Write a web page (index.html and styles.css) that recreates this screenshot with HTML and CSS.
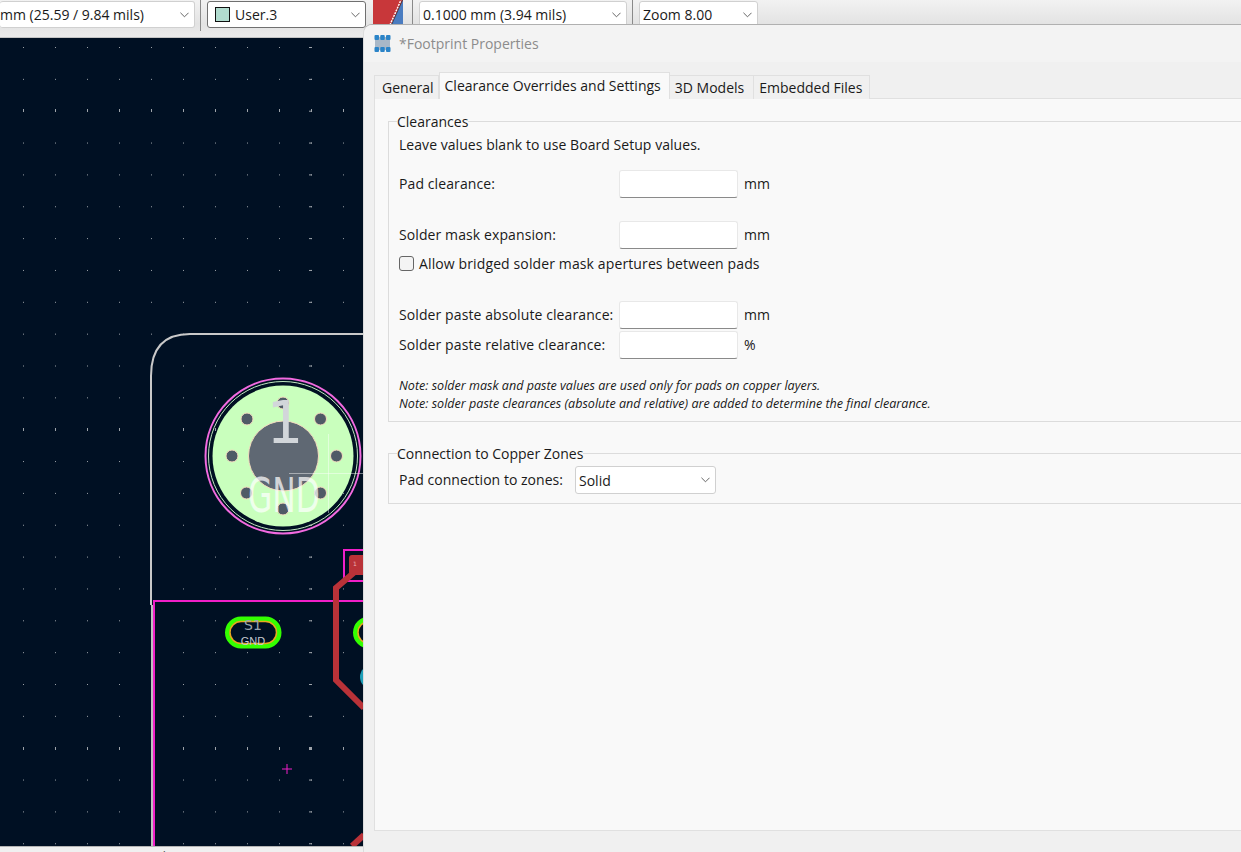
FILE: index.html
```html
<!DOCTYPE html>
<html lang="en">
<head>
    <meta charset="UTF-8">
    <title>Footprint Properties</title>
    <link rel="stylesheet" href="styles.css">
</head>
<body>
<div class="toolbar">
    <div class="combo combo-track"><span class="combo-text">mm (25.59 / 9.84 mils)</span><svg class="chev" viewBox="0 0 10 6"><path d="M.5.5 5 5 9.500.5"/></svg></div>
    <i class="sep"></i>
    <div class="combo combo-layer"><i class="swatch"></i><span class="combo-text">User.3</span><svg class="chev" viewBox="0 0 10 6"><path d="M.5.5 5 5 9.500.5"/></svg></div>
    <svg class="pair" viewBox="0 0 30 25"><rect width="30" height="25" fill="#c8373a"/><path d="M18 25 30 0V25Z" fill="#4a7cc0"/><path d="M17 25 28 0" stroke="#fff" stroke-width="1.500" stroke-dasharray="2 1"/><path d="M18.500 25 29.500 0" stroke="#333" stroke-width=".7"/></svg>
    <i class="sep sep-pair"></i>
    <div class="combo combo-grid"><span class="combo-text">0.1000 mm (3.94 mils)</span><svg class="chev" viewBox="0 0 10 6"><path d="M.5.5 5 5 9.500.5"/></svg></div>
    <i class="sep"></i>
    <div class="combo combo-zoom"><span class="combo-text">Zoom 8.00</span><svg class="chev" viewBox="0 0 10 6"><path d="M.5.5 5 5 9.500.5"/></svg></div>
</div>

<svg class="canvas" viewBox="0 38 1241 808">
    <defs>
        <pattern id="grid" x="23" y="47" width="32" height="31.85" patternUnits="userSpaceOnUse">
            <rect width="1" height="1" fill="#9aa0a6"/>
        </pattern>
        <pattern id="gridrow" x="23" y="428" width="32" height="319" patternUnits="userSpaceOnUse">
            <rect width="1" height="3" fill="#9ea4aa"/>
        </pattern>
        <pattern id="gridcol" x="309" y="47" width="320" height="31.85" patternUnits="userSpaceOnUse">
            <rect width="3" height="1" fill="#9ea4aa"/>
        </pattern>
    </defs>
    <rect x="0" y="38" width="1241" height="808" fill="url(#grid)"/>
    <rect x="0" y="38" width="1241" height="808" fill="url(#gridrow)"/>
    <rect x="0" y="38" width="1241" height="808" fill="url(#gridcol)"/>
    <rect x="309" y="747" width="3" height="3" fill="#9ea4aa"/>

    <path d="M151 605V376Q151 334 190 334H364" class="edge"/>
    <path d="M152 605V846" class="edge edge-low"/>
    <path d="M154 846V601H364" class="courtyard"/>
    <path d="M364 550H344V581H364" class="courtyard"/>

    <path d="M357 570 336 588V680L364 708" class="track"/>
    <path d="M352 846 364 835" class="track"/>
    <rect x="349" y="555" width="24" height="20" rx="3" fill="#b93238"/>
    <text x="353" y="566" class="tiny">1</text>
    <circle cx="372" cy="677" r="12" fill="#1f9fb8"/>

    <circle cx="283" cy="456" r="77.500" class="ring-pink"/>
    <circle cx="283" cy="456" r="74.500" class="ring-thin"/>
    <circle cx="283" cy="456" r="70.500" fill="#c9ffbd"/>
    <circle cx="283.500" cy="456" r="35" fill="#5f6873" stroke="#f4dcc0" stroke-width="1"/>
    <g class="vias">
        <circle cx="283" cy="403" r="6" fill="#b3b9c0"/>
        <circle cx="247" cy="419" r="6"/>
        <circle cx="320.500" cy="419" r="6"/>
        <circle cx="232" cy="456" r="6"/>
        <circle cx="336.500" cy="456" r="6"/>
        <circle cx="246.500" cy="493" r="6"/>
        <circle cx="320.500" cy="493" r="6"/>
        <circle cx="283" cy="509" r="6"/>
    </g>
    <text x="285" y="443" text-anchor="middle" class="pad-num">1</text>
    <text x="248" y="512" textLength="72" lengthAdjust="spacingAndGlyphs" class="pad-net">GND</text>
    <path d="M328.500 434V513M289 473.500H364" class="cross-white"/>

    <rect x="227.500" y="619" width="51.500" height="27" rx="13.500" class="oval"/>
    <rect x="230" y="621.500" width="46.500" height="22" rx="11" class="oval-in"/>
    <text x="253" y="630" text-anchor="middle" class="oval-name">S1</text>
    <text x="253" y="645" text-anchor="middle" class="oval-net">GND</text>
    <rect x="355.500" y="619" width="51.500" height="27" rx="13.500" class="oval"/>
    <rect x="358" y="621.500" width="46.500" height="22" rx="11" class="oval-in"/>

    <path d="M282 769H292M287 764V774" class="cross-pink"/>
</svg>

<div class="status"><span>Pads</span><span>Footprint</span><span>Fi</span></div>

<div class="dialog">
    <div class="title">
        <svg class="title-icon" viewBox="0 0 17 17"><rect x="1" y="2" width="15" height="13" rx="1.500" fill="#a9b8c8"/><g fill="#2b84c8"><rect x=".5" y="0" width="4.500" height="5" rx="1"/><rect x="6.250" y="0" width="4.500" height="5" rx="1"/><rect x="12" y="0" width="4.500" height="5" rx="1"/><rect x=".5" y="12" width="4.500" height="5" rx="1"/><rect x="6.250" y="12" width="4.500" height="5" rx="1"/><rect x="12" y="12" width="4.500" height="5" rx="1"/></g></svg>
        <span>*Footprint Properties</span>
    </div>
    <div class="tabs">
        <div class="tab">General</div>
        <div class="tab tab-active">Clearance Overrides and Settings</div>
        <div class="tab tab-models">3D Models</div>
        <div class="tab">Embedded Files</div>
    </div>
    <div class="page">
        <fieldset class="group group-clear">
            <legend>Clearances</legend>
            <p class="hint">Leave values blank to use Board Setup values.</p>
            <div class="row row-pad"><label>Pad clearance:</label><i class="input"></i><span>mm</span></div>
            <div class="row row-mask"><label>Solder mask expansion:</label><i class="input"></i><span>mm</span></div>
            <div class="check-row"><i class="check"></i><span>Allow bridged solder mask apertures between pads</span></div>
            <div class="row row-abs"><label>Solder paste absolute clearance:</label><i class="input"></i><span>mm</span></div>
            <div class="row row-rel"><label>Solder paste relative clearance:</label><i class="input"></i><span>%</span></div>
            <p class="note note-first">Note: solder mask and paste values are used only for pads on copper layers.</p>
            <p class="note">Note: solder paste clearances (absolute and relative) are added to determine the final clearance.</p>
        </fieldset>
        <fieldset class="group group-zones">
            <legend>Connection to Copper Zones</legend>
            <div class="zone-row">
                <label>Pad connection to zones:</label>
                <div class="combo combo-solid"><span class="combo-text">Solid</span><svg class="chev" viewBox="0 0 10 6"><path d="M.5.5 5 5 9.500.5"/></svg></div>
            </div>
        </fieldset>
    </div>
</div>
</body>
</html>
```
FILE: styles.css
```css
html, body {
    margin: 0;
    height: 100%;
}

body {
    position: relative;
    width: 1241px;
    height: 852px;
    overflow: hidden;
    display: flex;
    flex-direction: column;
    background: #f0f0f0;
    color: #1a1a1a;
    font: 14px "Open Sans", "Noto Sans", sans-serif;
}

/* toolbar */
.toolbar {
    flex: none;
    height: 37px;
    display: flex;
    align-items: flex-start;
    border-bottom: 1px solid #c4c4c4;
    background: linear-gradient(#f2f2f2, #e3e3e3 24px, #ebebeb);
}

.combo {
    box-sizing: border-box;
    height: 27px;
    display: flex;
    align-items: center;
    background: #fff;
    border: 1px solid #d0d0d0;
    border-radius: 3px;
    padding: 0 5px 0 3px;
}

.combo-text {
    flex: 1;
    white-space: nowrap;
}

.chev {
    flex: none;
    width: 9px;
    height: 6px;
    fill: none;
    stroke: #555;
    stroke-width: 1;
}

.toolbar .combo {
    margin-top: 1px;
}

.combo-track {
    width: 195px;
    border-left: 0;
    padding-left: 0;
}

.combo-layer {
    width: 159px;
    border-color: #707070;
    padding-left: 7px;
}

.combo-grid {
    width: 208px;
}

.combo-zoom {
    width: 119px;
}

.sep {
    flex: none;
    width: 1px;
    height: 31px;
    background: #8a8a8a;
    margin: 0 6px 0 5px;
}

.sep-pair {
    margin-left: 9px;
}

.swatch {
    width: 13px;
    height: 13px;
    margin-right: 5px;
    background: #b1dccf;
    border: 1px solid #111;
}

.pair {
    flex: none;
    width: 30px;
    height: 25px;
    margin-left: 7px;
}

/* board canvas */
.canvas {
    flex: none;
    display: block;
    width: 1241px;
    height: 808px;
    background: #001023;
}

.edge {
    fill: none;
    stroke: #c9c9c9;
    stroke-width: 2;
}

.edge-low {
    stroke: #bdbdbd;
}

.courtyard {
    fill: none;
    stroke: #f01fc8;
    stroke-width: 2;
}

.track {
    fill: none;
    stroke: #b93238;
    stroke-width: 6;
}

.tiny {
    font: 6px "DejaVu Sans", sans-serif;
    fill: #e8b0b0;
}

.ring-pink {
    fill: none;
    stroke: #f26ae0;
    stroke-width: 2;
}

.ring-thin {
    fill: none;
    stroke: #c0e8c0;
    stroke-width: 1;
}

.vias circle {
    fill: #4f5a66;
    stroke: #f4dcc0;
    stroke-width: 1;
}

.pad-num {
    font: 58px "DejaVu Sans", sans-serif;
    fill: #d2d6da;
}

.pad-net {
    font: 48px "DejaVu Sans", sans-serif;
    fill: #fff;
    fill-opacity: .72;
}

.cross-white {
    fill: none;
    stroke: #fff;
    stroke-opacity: .45;
    stroke-width: 1;
}

.oval {
    fill: none;
    stroke: #33ff00;
    stroke-width: 5;
}

.oval-in {
    fill: none;
    stroke: #e8a820;
    stroke-width: 1.500;
}

.oval-name {
    font: 14px "DejaVu Sans", sans-serif;
    fill: #9aa4ae;
}

.oval-net {
    font: 11px "Liberation Sans", sans-serif;
    fill: #c6ccd2;
}

.cross-pink {
    fill: none;
    stroke: #f01fc8;
    stroke-width: 1;
}

/* only the tops of the status labels show above the window edge */
.status {
    flex: 1;
    display: flex;
    gap: 56px;
    padding: 4px 0 0 143px;
    overflow: hidden;
    line-height: 11px;
    font-size: 13px;
    color: #555;
    border-top: 1px solid #b4b4b4;
}

/* dialog window, floats over the editor */
.dialog {
    position: absolute;
    left: 364px;
    top: 25px;
    right: 0;
    bottom: 0;
    display: flex;
    flex-direction: column;
    background: #f0f0f0;
    border-top-left-radius: 8px;
    box-shadow: 0 -1px 0 #b0b0b0, -1px 0 0 #dcdcdc;
}

.title {
    flex: none;
    height: 37px;
    display: flex;
    align-items: center;
    padding-left: 10px;
    gap: 8px;
    color: #8c8c8c;
    background: #f3f3f3;
    border-top-left-radius: 8px;
}

.title-icon {
    width: 17px;
    height: 17px;
}

.tabs {
    flex: none;
    height: 26px;
    display: flex;
    align-items: flex-end;
    padding-left: 10px;
    margin-top: 11px;
    position: relative;
    z-index: 1;
    margin-bottom: -1px;
}

.tab {
    height: 24px;
    line-height: 23px;
    padding: 0 7px 0 5px;
    background: #f0f0f0;
    border: 1px solid #e0e0e0;
    border-bottom: 0;
    border-left-width: 0;
    box-sizing: border-box;
}

.tab:first-child {
    border-left-width: 1px;
    padding: 0 4px 0 7px;
}

.tab-active {
    height: 27px;
    line-height: 25px;
    background: #f9f9f9;
    border-left-width: 1px;
    padding: 0 8px 0 5px;
}

.tab-models {
    padding-right: 9px;
}

.page {
    flex: 1;
    margin: 0 0 21px 10px;
    background: #f9f9f9;
    border: 1px solid #e0e0e0;
    border-right: 0;
    padding-top: 13px;
}

.group {
    margin: 0 0 0 13px;
    padding: 0 0 0 10px;
    border: 1px solid #dcdcdc;
    border-right: 0;
    min-width: 0;
}

.group legend {
    padding: 2px 0 0;
    margin-left: -2px;
    line-height: 16px;
}

.group-clear {
    height: 310px;
    box-sizing: border-box;
}

.group-zones {
    margin-top: 22px;
    height: 60px;
    box-sizing: border-box;
}

.hint {
    margin: 6px 0 0;
    line-height: 18px;
    letter-spacing: .05px;
}

.row {
    display: flex;
    align-items: center;
    height: 28px;
}

.row label {
    width: 220px;
    flex: none;
    padding-bottom: 2px;
    letter-spacing: .1px;
}

.row span {
    margin-left: 6px;
    padding-bottom: 2px;
}

.input {
    width: 119px;
    height: 28px;
    box-sizing: border-box;
    background: #fff;
    border: 1px solid #e8e8e8;
    border-bottom: 1px solid #8a8a8a;
    border-radius: 3px;
}

.row-pad {
    margin-top: 16px;
}

.row-mask {
    margin-top: 23px;
}

.check-row {
    display: flex;
    align-items: center;
    height: 20px;
    margin-top: 4px;
    letter-spacing: .12px;
}

.check {
    box-sizing: border-box;
    width: 15px;
    height: 15px;
    margin-right: 5px;
    background: #f4f4f4;
    border: 1px solid #666;
    border-radius: 3px;
}

.row-abs {
    margin-top: 28px;
}

.row-rel {
    margin-top: 2px;
}

.note {
    margin: 0;
    font-size: 12.560px;
    font-style: italic;
    line-height: 18px;
}

.note-first {
    margin-top: 18px;
}

.zone-row {
    display: flex;
    align-items: center;
    margin-top: 4px;
}

.zone-row label {
    margin-right: 12px;
    padding-bottom: 2px;
    letter-spacing: .03px;
}

.combo-solid {
    width: 141px;
    height: 28px;
}
```
